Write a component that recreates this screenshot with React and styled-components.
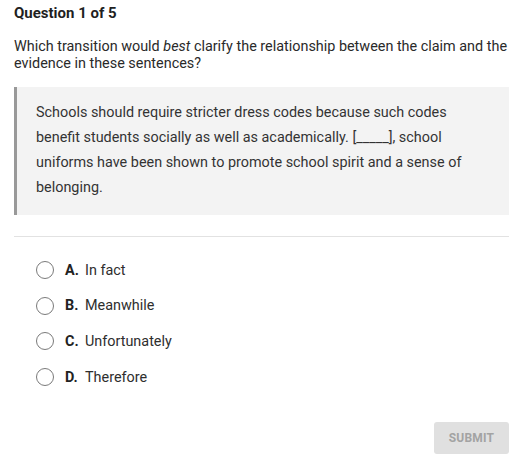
import React from "react";
import styled, { createGlobalStyle } from "styled-components";

const Global = createGlobalStyle`
  body {
    margin: 0;
    background: #fff;
    font-family: Roboto, "Liberation Sans", Arial, sans-serif;
    color: #212121;
  }
`;

const Page = styled.div`
  padding: 4px 19px 16px 14px;
  display: flex;
  flex-direction: column;
`;

const Title = styled.h1`
  margin: 0;
  font-size: 15px;
  font-weight: 700;
  line-height: 18px;
  color: #1f1f1f;
`;

const Prompt = styled.p`
  margin: 16px 0 0;
  font-size: 14.4px;
  line-height: 17px;
  color: #2a2a2a;
`;

const Passage = styled.blockquote`
  margin: 15px 0 0;
  padding: 13px 40px 15px 19px;
  background: #f3f3f3;
  border-left: 3px solid #999;
  font-size: 14.4px;
  line-height: 25px;
  color: #333;
`;

const Divider = styled.hr`
  margin: 21px 0 0;
  border: 0;
  border-top: 1px solid #e2e2e2;
`;

const Options = styled.div`
  display: flex;
  flex-direction: column;
  gap: 13.7px;
  padding: 22px 0 0 22px;
`;

const Option = styled.label`
  display: flex;
  align-items: center;
  height: 22px;
  font-size: 14.4px;
  color: #2e2e2e;
  cursor: pointer;
`;

const Radio = styled.span`
  box-sizing: border-box;
  width: 18px;
  height: 18px;
  border: 1.3px solid #7a7a7a;
  border-radius: 50%;
  margin-right: 11px;
  flex-shrink: 0;
`;

const Letter = styled.b`
  font-weight: 700;
  width: 20px;
  color: #222;
`;

const Footer = styled.div`
  display: flex;
  justify-content: flex-end;
  margin-top: 34px;
`;

const Submit = styled.button`
  width: 75px;
  height: 32px;
  border: 0;
  border-radius: 3px;
  background: #e0e0e0;
  color: #a3a3a3;
  font-family: inherit;
  font-size: 12px;
  font-weight: 700;
  letter-spacing: 0.2px;
`;

const choices = [
  ["A.", "In fact"],
  ["B.", "Meanwhile"],
  ["C.", "Unfortunately"],
  ["D.", "Therefore"],
];

export default function App() {
  return (
    <>
      <Global />
      <Page>
        <Title>Question 1 of 5</Title>
        <Prompt>
          Which transition would <i>best</i> clarify the relationship between the claim and the
          evidence in these sentences?
        </Prompt>
        <Passage>
          Schools should require stricter dress codes because such codes benefit students
          socially as well as academically. [_____], school uniforms have been shown to promote
          school spirit and a sense of belonging.
        </Passage>
        <Divider />
        <Options>
          {choices.map(([l, t]) => (
            <Option key={l}>
              <Radio />
              <Letter>{l}</Letter>
              {t}
            </Option>
          ))}
        </Options>
        <Footer>
          <Submit>SUBMIT</Submit>
        </Footer>
      </Page>
    </>
  );
}
